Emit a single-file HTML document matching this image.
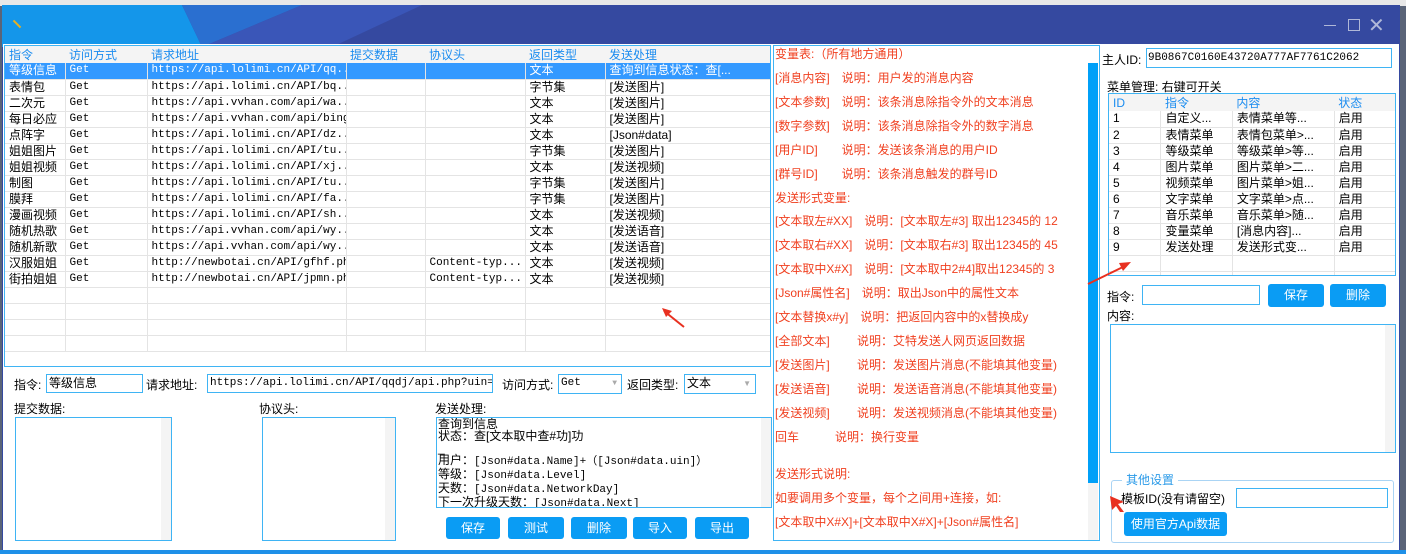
<!DOCTYPE html>
<html><head><meta charset="utf-8"><style>
*{margin:0;padding:0;box-sizing:border-box}
body{width:1406px;height:554px;overflow:hidden;background:#5a6478;font-family:"Liberation Sans","Noto Sans CJK SC",sans-serif;font-size:12px;color:#000;position:relative}
.a{position:absolute}
.m{font-family:"Liberation Mono","Noto Sans CJK SC",monospace;font-size:11px}
.bx{position:absolute;border:1px solid #3fb4f4;background:#fff}
.btn{position:absolute;background:#0a9cf4;color:#fff;border-radius:3px;text-align:center;line-height:22px;font-size:12px}
table{border-collapse:collapse;table-layout:fixed}
td{border-right:1px solid #e4e4e4;border-bottom:1px solid #e4e4e4;height:16px;padding:0 4px;white-space:nowrap;overflow:hidden;font-size:12px;line-height:15px}
th{font-weight:normal;color:#1a8cf0;text-align:left;padding:0 4px;height:16px;background:#f4f4f4;font-size:12px}
.sel td{background:#3399ff;color:#fff}
.r{color:#f04020;position:absolute;left:775px;font-size:12px}
</style></head><body>
<div class="a" style="left:0;top:0;width:1406px;height:6px;background:#e8e8e8"></div>
<div class="a" style="left:2px;top:5px;width:1398px;height:546px;background:#3549a0;overflow:hidden">
 <svg class="a" style="left:0;top:0" width="1398" height="42"><polygon points="0,0 180,0 200,42 0,42" fill="#1496ea"/><polygon points="180,0 300,0 200,42" fill="#2a6fd0"/><polygon points="300,0 420,0 330,42 200,42" fill="#3a56b8"/></svg>
 <div class="a" style="left:10px;top:18px;width:10px;height:2px;background:#e8b020;transform:rotate(45deg)"></div>
 <div class="a" style="left:1322px;top:20px;width:12px;height:1px;background:#b0b8d8"></div>
 <div class="a" style="left:1346px;top:14px;width:12px;height:12px;border:1px solid #b0b8d8"></div>
 <div class="a" style="left:1366px;top:8px;color:#b0b8d8;font-size:20px">✕</div>
</div>
<div class="a" style="left:3px;top:44px;width:1396px;height:506px;background:#fff"></div>
<!-- main table -->
<div class="bx" style="left:4px;top:45px;width:767px;height:322px;overflow:hidden">
<table style="width:766px"><colgroup><col style="width:60px"><col style="width:82px"><col style="width:199px"><col style="width:79px"><col style="width:100px"><col style="width:80px"><col style="width:166px"></colgroup>
<tr><th>指令</th><th>访问方式</th><th>请求地址</th><th>提交数据</th><th>协议头</th><th>返回类型</th><th>发送处理</th></tr>
<tr class="sel"><td>等级信息</td><td class="m">Get</td><td class="m">https://api.lolimi.cn/API/qq...</td><td></td><td></td><td>文本</td><td>查询到信息状态：查[...</td></tr>
<tr><td>表情包</td><td class="m">Get</td><td class="m">https://api.lolimi.cn/API/bq...</td><td></td><td></td><td>字节集</td><td>[发送图片]</td></tr>
<tr><td>二次元</td><td class="m">Get</td><td class="m">https://api.vvhan.com/api/wa...</td><td></td><td></td><td>文本</td><td>[发送图片]</td></tr>
<tr><td>每日必应</td><td class="m">Get</td><td class="m">https://api.vvhan.com/api/bing</td><td></td><td></td><td>文本</td><td>[发送图片]</td></tr>
<tr><td>点阵字</td><td class="m">Get</td><td class="m">https://api.lolimi.cn/API/dz...</td><td></td><td></td><td>文本</td><td>[Json#data]</td></tr>
<tr><td>姐姐图片</td><td class="m">Get</td><td class="m">https://api.lolimi.cn/API/tu...</td><td></td><td></td><td>字节集</td><td>[发送图片]</td></tr>
<tr><td>姐姐视频</td><td class="m">Get</td><td class="m">https://api.lolimi.cn/API/xj...</td><td></td><td></td><td>文本</td><td>[发送视频]</td></tr>
<tr><td>制图</td><td class="m">Get</td><td class="m">https://api.lolimi.cn/API/tu...</td><td></td><td></td><td>字节集</td><td>[发送图片]</td></tr>
<tr><td>膜拜</td><td class="m">Get</td><td class="m">https://api.lolimi.cn/API/fa...</td><td></td><td></td><td>字节集</td><td>[发送图片]</td></tr>
<tr><td>漫画视频</td><td class="m">Get</td><td class="m">https://api.lolimi.cn/API/sh...</td><td></td><td></td><td>文本</td><td>[发送视频]</td></tr>
<tr><td>随机热歌</td><td class="m">Get</td><td class="m">https://api.vvhan.com/api/wy...</td><td></td><td></td><td>文本</td><td>[发送语音]</td></tr>
<tr><td>随机新歌</td><td class="m">Get</td><td class="m">https://api.vvhan.com/api/wy...</td><td></td><td></td><td>文本</td><td>[发送语音]</td></tr>
<tr><td>汉服姐姐</td><td class="m">Get</td><td class="m">http://newbotai.cn/API/gfhf.php</td><td></td><td class="m">Content-typ...</td><td>文本</td><td>[发送视频]</td></tr>
<tr><td>街拍姐姐</td><td class="m">Get</td><td class="m">http://newbotai.cn/API/jpmn.php</td><td></td><td class="m">Content-typ...</td><td>文本</td><td>[发送视频]</td></tr>
<tr><td></td><td></td><td></td><td></td><td></td><td></td><td></td></tr>
<tr><td></td><td></td><td></td><td></td><td></td><td></td><td></td></tr>
<tr><td></td><td></td><td></td><td></td><td></td><td></td><td></td></tr>
<tr><td></td><td></td><td></td><td></td><td></td><td></td><td></td></tr>
</table></div>
<svg class="a" style="left:660px;top:305px" width="30" height="25"><line x1="24" y1="22" x2="4" y2="6" stroke="#e83020" stroke-width="2"/><polygon points="2,3 12,6 6,12" fill="#e83020"/></svg>
<!-- bottom form -->
<div class="a" style="left:14px;top:376px">指令:</div>
<div class="bx" style="left:46px;top:374px;width:97px;height:19px;padding-left:2px;line-height:17px">等级信息</div>
<div class="a" style="left:146px;top:376px">请求地址:</div>
<div class="bx m" style="left:207px;top:374px;width:286px;height:19px;padding-left:2px;line-height:17px;overflow:hidden;white-space:nowrap">https://api.lolimi.cn/API/qqdj/api.php?uin=[数字</div>
<div class="a" style="left:502px;top:376px">访问方式:</div>
<div class="bx m" style="left:558px;top:374px;width:64px;height:20px;padding-left:2px;line-height:17px">Get<span class="a" style="right:4px;color:#aaa;font-size:8px">▼</span></div>
<div class="a" style="left:627px;top:376px">返回类型:</div>
<div class="bx" style="left:684px;top:374px;width:72px;height:20px;padding-left:2px;line-height:17px">文本<span class="a" style="right:4px;color:#aaa;font-size:8px">▼</span></div>
<div class="a" style="left:14px;top:400px">提交数据:</div>
<div class="a" style="left:259px;top:400px">协议头:</div>
<div class="a" style="left:435px;top:400px">发送处理:</div>
<div class="bx" style="left:15px;top:417px;width:157px;height:124px"><div class="a" style="right:0;top:0;width:10px;height:122px;background:#f4f4f4"></div></div>
<div class="bx" style="left:262px;top:417px;width:134px;height:124px"><div class="a" style="right:0;top:0;width:10px;height:122px;background:#f4f4f4"></div></div>
<div class="bx" style="left:436px;top:417px;width:336px;height:91px;font-size:12px;line-height:12px;padding-left:1px;overflow:hidden">查询到信息<br>状态：查[文本取中查#功]功<br>_<br>用户：<span class="m">[Json#data.Name]+（[Json#data.uin]）</span><br>等级：<span class="m">[Json#data.Level]</span><br>天数：<span class="m">[Json#data.NetworkDay]</span><br>下一次升级天数：<span class="m">[Json#data.Next]</span><div class="a" style="right:0;top:0;width:10px;height:89px;background:#f4f4f4"></div></div>
<div class="btn" style="left:446px;top:517px;width:54px">保存</div>
<div class="btn" style="left:508px;top:517px;width:56px">测试</div>
<div class="btn" style="left:571px;top:517px;width:56px">删除</div>
<div class="btn" style="left:633px;top:517px;width:54px">导入</div>
<div class="btn" style="left:695px;top:517px;width:54px">导出</div>
<!-- middle panel -->
<div class="bx" style="left:773px;top:45px;width:327px;height:496px"></div>
<div class="a" style="left:1088px;top:63px;width:10px;height:420px;background:#00a0f8"></div>
<div class="a" style="left:1088px;top:483px;width:10px;height:57px;background:#f4f4f4"></div>
<div class="r" style="top:45px">变量表:（所有地方通用）</div>
<div class="r" style="top:69px">[消息内容]　说明：用户发的消息内容</div>
<div class="r" style="top:93px">[文本参数]　说明：该条消息除指令外的文本消息</div>
<div class="r" style="top:117px">[数字参数]　说明：该条消息除指令外的数字消息</div>
<div class="r" style="top:141px">[用户ID]　　说明：发送该条消息的用户ID</div>
<div class="r" style="top:165px">[群号ID]　　说明：该条消息触发的群号ID</div>
<div class="r" style="top:189px">发送形式变量:</div>
<div class="r" style="top:212px">[文本取左#XX]　说明：[文本取左#3] 取出12345的 12</div>
<div class="r" style="top:236px">[文本取右#XX]　说明：[文本取右#3] 取出12345的 45</div>
<div class="r" style="top:260px">[文本取中X#X]　说明：[文本取中2#4]取出12345的 3</div>
<div class="r" style="top:284px">[Json#属性名]　说明：取出Json中的属性文本</div>
<div class="r" style="top:308px">[文本替换x#y]　说明：把返回内容中的x替换成y</div>
<div class="r" style="top:332px">[全部文本]　　 说明：艾特发送人网页返回数据</div>
<div class="r" style="top:356px">[发送图片]　　 说明：发送图片消息(不能填其他变量)</div>
<div class="r" style="top:380px">[发送语音]　　 说明：发送语音消息(不能填其他变量)</div>
<div class="r" style="top:404px">[发送视频]　　 说明：发送视频消息(不能填其他变量)</div>
<div class="r" style="top:428px">回车　　　说明：换行变量</div>
<div class="r" style="top:465px">发送形式说明:</div>
<div class="r" style="top:489px">如要调用多个变量，每个之间用+连接，如:</div>
<div class="r" style="top:513px">[文本取中X#X]+[文本取中X#X]+[Json#属性名]</div>
<!-- right panel -->
<div class="a" style="left:1102px;top:51px">主人ID:</div>
<div class="bx m" style="left:1146px;top:48px;width:246px;height:20px;padding-left:1px;line-height:18px">9B0867C0160E43720A777AF7761C2062</div>
<div class="a" style="left:1107px;top:78px">菜单管理: 右键可开关</div>
<div class="bx" style="left:1108px;top:93px;width:288px;height:183px;overflow:hidden">
<table style="width:287px"><colgroup><col style="width:51px"><col style="width:70px"><col style="width:100px"><col style="width:60px"></colgroup>
<tr><th>ID</th><th>指令</th><th>内容</th><th>状态</th></tr>
<tr><td>1</td><td>自定义...</td><td>表情菜单等...</td><td>启用</td></tr>
<tr><td>2</td><td>表情菜单</td><td>表情包菜单>...</td><td>启用</td></tr>
<tr><td>3</td><td>等级菜单</td><td>等级菜单>等...</td><td>启用</td></tr>
<tr><td>4</td><td>图片菜单</td><td>图片菜单>二...</td><td>启用</td></tr>
<tr><td>5</td><td>视频菜单</td><td>图片菜单>姐...</td><td>启用</td></tr>
<tr><td>6</td><td>文字菜单</td><td>文字菜单>点...</td><td>启用</td></tr>
<tr><td>7</td><td>音乐菜单</td><td>音乐菜单>随...</td><td>启用</td></tr>
<tr><td>8</td><td>变量菜单</td><td>[消息内容]...</td><td>启用</td></tr>
<tr><td>9</td><td>发送处理</td><td>发送形式变...</td><td>启用</td></tr>
<tr><td></td><td></td><td></td><td></td></tr>
<tr><td></td><td></td><td></td><td></td></tr>
</table></div>
<svg class="a" style="left:1085px;top:258px" width="50" height="30"><line x1="3" y1="26" x2="40" y2="8" stroke="#e83020" stroke-width="2"/><polygon points="46,4 34,5 38,13" fill="#e83020"/></svg>
<div class="a" style="left:1107px;top:288px">指令:</div>
<div class="bx" style="left:1142px;top:285px;width:118px;height:20px"></div>
<div class="btn" style="left:1268px;top:284px;width:56px;height:23px">保存</div>
<div class="btn" style="left:1330px;top:284px;width:56px;height:23px">删除</div>
<div class="a" style="left:1107px;top:307px">内容:</div>
<div class="bx" style="left:1110px;top:324px;width:286px;height:129px"><div class="a" style="right:0;top:0;width:10px;height:127px;background:#f4f4f4"></div></div>
<div class="a" style="left:1111px;top:480px;width:283px;height:63px;border:1px solid #aad4f4;border-radius:3px"></div>
<div class="a" style="left:1122px;top:471px;background:#fff;padding:0 4px;color:#2a9ae8">其他设置</div>
<div class="a" style="left:1121px;top:490px">模板ID(没有请留空)</div>
<div class="bx" style="left:1236px;top:488px;width:152px;height:20px"></div>
<div class="btn" style="left:1124px;top:512px;width:103px;height:24px;line-height:24px">使用官方Api数据</div>
<svg class="a" style="left:1108px;top:492px" width="22" height="22"><polygon points="2,4 16,10 10,12 16,20 12,20 8,14 4,18" fill="#e83020"/></svg>
<div class="a" style="left:0;top:550px;width:1406px;height:4px;background:#1e90e8"></div>
</body></html>
